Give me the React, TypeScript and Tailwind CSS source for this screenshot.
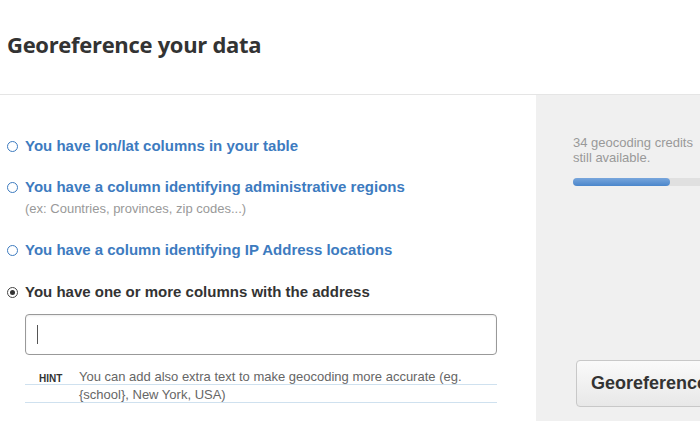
import React from "react";

const options = [
  { label: "You have lon/lat columns in your table", sub: null, checked: false },
  {
    label: "You have a column identifying administrative regions",
    sub: "(ex: Countries, provinces, zip codes...)",
    checked: false,
  },
  { label: "You have a column identifying IP Address locations", sub: null, checked: false },
  { label: "You have one or more columns with the address", sub: null, checked: true },
];

function Radio({ checked }: { checked: boolean }) {
  return (
    <span
      className={`flex h-[11px] w-[11px] shrink-0 items-center justify-center rounded-full border ${
        checked ? "border-[#444]" : "border-[#3d7bbf]"
      } bg-white`}
    >
      {checked && <span className="h-[5px] w-[5px] rounded-full bg-[#333]" />}
    </span>
  );
}

export default function App() {
  return (
    <div className="h-[421px] w-[700px] overflow-hidden bg-white font-['Liberation_Sans',Arial,sans-serif]">
      {/* Header */}
      <header className="h-[95px] border-b border-[#e5e5e5] pl-[7px] pt-[29px]">
        <h1 className="font-['Open_Sans',sans-serif] text-[22px] font-bold leading-[30px] tracking-[-0.3px] text-[#333]">
          Georeference your data
        </h1>
      </header>

      <div className="flex h-[326px]">
        {/* Options */}
        <div className="w-[536px] shrink-0 pl-[7px] pt-[42px]">
          {options.map((opt, i) => (
            <div key={i} className={i === 0 ? "" : i === 1 ? "mt-[23px]" : i === 2 ? "mt-[25px]" : "mt-[24px]"}>
              <div className="flex items-center gap-[7px]">
                <Radio checked={opt.checked} />
                <span
                  className={`text-[15px] font-bold leading-[18px] ${
                    opt.checked ? "text-[#333]" : "text-[#3d7bbf]"
                  }`}
                >
                  {opt.label}
                </span>
              </div>
              {opt.sub && (
                <div className="mt-[5px] pl-[18px] text-[13px] leading-[15px] text-[#999]">{opt.sub}</div>
              )}
            </div>
          ))}

          <div className="ml-[18px] mt-[13px] w-[472px]">
            <div className="flex h-[41px] items-center rounded-[4px] border border-[#999] px-[11px] shadow-[inset_0_1px_2px_rgba(0,0,0,0.08)]">
              <span className="h-[19px] w-px bg-[#555]" />
            </div>

            <div className="mt-[13px] flex [background-image:linear-gradient(to_bottom,transparent_16px,#cfe1ef_16px,#cfe1ef_17px,transparent_17px)] [background-size:100%_18px]">
              <span className="w-[54px] shrink-0 pl-[14px] pt-[4px] text-[10px] font-bold leading-[14px] text-[#333]">
                HINT
              </span>
              <p className="text-[13px] leading-[18px] text-[#666]">
                You can add also extra text to make geocoding more accurate (eg.
                <br />
                {"{school}"}, New York, USA)
              </p>
            </div>
          </div>
        </div>

        {/* Side panel */}
        <aside className="flex min-w-0 flex-1 flex-col overflow-hidden bg-[#f0f0f0] pl-[37px] pt-[40px]">
          <p className="text-[13px] leading-[15px] text-[#999]">
            34 geocoding credits
            <br />
            still available.
          </p>
          <div className="mt-[13px] h-[8px] w-full rounded-l-full bg-[#e0e0e0]">
            <div className="h-full w-[97px] rounded-full bg-gradient-to-b from-[#78a6dc] to-[#4a86cb]" />
          </div>
          <button className="ml-[3px] mt-[174px] h-[47px] w-[200px] shrink-0 rounded-[4px] border border-[#c8c8c8] bg-gradient-to-b from-[#fafafa] to-[#e8e8e8] pl-[14px] text-left text-[18px] font-bold text-[#333]">
            Georeference
          </button>
        </aside>
      </div>
    </div>
  );
}
